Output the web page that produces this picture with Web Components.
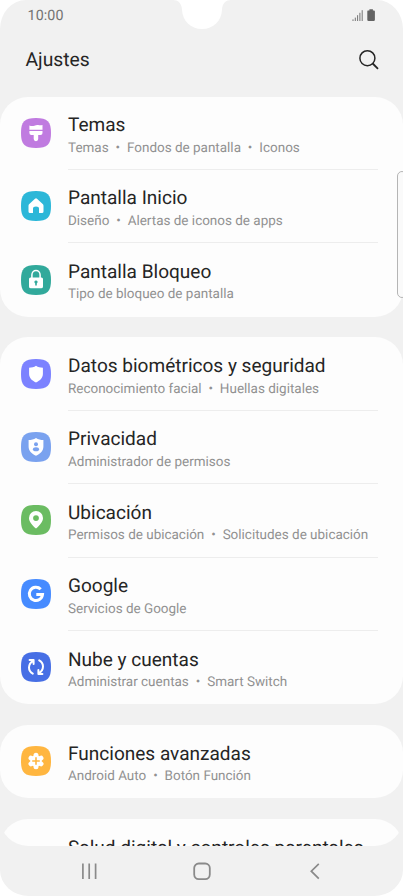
<!DOCTYPE html>
<html lang="es">
<head>
<meta charset="utf-8">
<title>Ajustes</title>
<style>
  html, body {
    margin: 0;
    height: 100%;
    background: #fff;
    overflow: hidden;
  }
  body {
    font-family: Roboto, "Liberation Sans", sans-serif;
    text-rendering: geometricPrecision;
  }
</style>
</head>
<body>
<phone-screen>
  <status-bar slot="status" time="10:00"></status-bar>
  <app-header slot="header">Ajustes</app-header>

  <settings-card>
    <settings-row icon="themes" color="#c07be0" summary="Temas|Fondos de pantalla|Iconos">Temas</settings-row>
    <settings-row icon="home" color="#2cb7d8" summary="Diseño|Alertas de iconos de apps">Pantalla Inicio</settings-row>
    <settings-row icon="lock" color="#31a99b" summary="Tipo de bloqueo de pantalla">Pantalla Bloqueo</settings-row>
  </settings-card>

  <settings-card>
    <settings-row icon="shield" color="#7c82ff" summary="Reconocimiento facial|Huellas digitales">Datos biométricos y seguridad</settings-row>
    <settings-row icon="privacy" color="#7aa2ef" summary="Administrador de permisos">Privacidad</settings-row>
    <settings-row icon="pin" color="#6bbc62" summary="Permisos de ubicación|Solicitudes de ubicación">Ubicación</settings-row>
    <settings-row icon="google" color="#468bff" summary="Servicios de Google">Google</settings-row>
    <settings-row icon="sync" color="#476fe5" summary="Administrar cuentas|Smart Switch">Nube y cuentas</settings-row>
  </settings-card>

  <settings-card>
    <settings-row icon="advanced" color="#ffb640" summary="Android Auto|Botón Función">Funciones avanzadas</settings-row>
  </settings-card>

  <settings-card>
    <settings-row>Salud digital y controles parentales</settings-row>
  </settings-card>

  <edge-handle slot="overlay"></edge-handle>
  <nav-bar slot="nav"></nav-bar>
</phone-screen>

<script>
// Glyphs on a 30x30 tile
const ICONS = {
  themes: `
    <path d="M8.4 7.4q2.4 1.2 5 .3 2.2-.9 3.8-.6 2.1.4 4.3-.1v4.7H8.4z"/>
    <path d="M8.4 12.900h13.100v2q0 2-2 2h-2.300v4.200q0 2.100-2.250 2.100t-2.250-2.100v-4.200h-2.300q-2 0-2-2z"/>`,
  home: `<path d="M14 7.700q1-.9 2 0l5.700 5.300q.8.700.8 1.800v5.700q0 1.500-1.500 1.500h-3v-4.600q0-2-3-2t-3 2V22H9q-1.500 0-1.500-1.500v-5.700q0-1.100.8-1.800z"/>`,
  lock: `
    <path d="M10.900 13V9.900a4.100 4.300 0 0 1 8.200 0V13" fill="none" stroke="#fff" stroke-width="1.500"/>
    <path fill-rule="evenodd" d="M9.500 12.400h11q1.500 0 1.500 1.500v7.500q0 1.900-1.900 1.900H9.900Q8 23.300 8 21.400v-7.500q0-1.500 1.500-1.500zM15 15.400a1.600 1.600 0 0 0-.8 3v2.200h1.600v-2.200a1.600 1.600 0 0 0-.8-3z"/>`,
  shield: `<path d="M15 6.800c2 1.400 4.300 1.900 6.900 1.900v6.100c0 3.900-2.700 6.900-6.900 8.600-4.200-1.700-6.900-4.700-6.900-8.600V8.700c2.600 0 4.900-.5 6.900-1.900z"/>`,
  privacy: `
    <path d="M15 6c2.200 1.500 4.700 2 7.400 2v6.600c0 4.200-2.900 7.400-7.400 9.200-4.500-1.800-7.400-5-7.400-9.200V8c2.700 0 5.200-.5 7.400-2z"/>
    <circle cx="15" cy="12.200" r="2" fill="var(--tile)"/>
    <ellipse cx="15" cy="17.300" rx="3.100" ry="2" fill="var(--tile)"/>`,
  pin: `<path fill-rule="evenodd" d="M15 6a7 6.900 0 0 1 7 6.900c0 4-3.200 6.900-6.300 10.200q-.7.700-1.400 0C11.200 19.800 8 16.900 8 12.900A7 6.900 0 0 1 15 6zm0 4.200a2.900 2.900 0 1 0 0 5.800 2.900 2.900 0 0 0 0-5.800z"/>`,
  google: `<path d="M19.700 10.300A6.600 6.600 0 1 0 21.500 15.600H15.300" fill="none" stroke="#fff" stroke-width="3"/>`,
  sync: `
    <g fill="none" stroke="#fff" stroke-width="2" stroke-linecap="round" stroke-linejoin="round">
      <path d="M11.800 21.600C6.800 18.800 6.600 12.500 12.100 8.500M8.600 8h4v4"/>
      <path d="M18.200 8.400C23.200 11.200 23.400 17.500 17.900 21.500M21.400 22h-4v-4"/>
    </g>`,
  advanced: `
    <g stroke="#fff" stroke-width="5" stroke-linecap="round">
      <path d="M15 9.300v11.400M10 12.150l10 5.700M10 17.850l10-5.700"/>
    </g>
    <circle cx="15" cy="15" r="5.700"/>
    <path d="M15 11.200v7.600M11.200 15h7.600" stroke="var(--tile)" stroke-width="1.600"/>`
};

class PhoneScreen extends HTMLElement {
  constructor() {
    super();
    this.attachShadow({ mode: 'open' });
    this.shadowRoot.innerHTML = `
      <style>
        :host {
          position: relative;
          display: flex;
          flex-direction: column;
          width: 403px;
          height: 896px;
          background: #f1f1f1;
          border-radius: 26px 26px 29px 29px / 29px 29px 26px 26px;
          overflow: hidden;
        }
        main {
          flex: 1;
          min-height: 0;
          display: flex;
          flex-direction: column;
          gap: 20.7px;
          overflow: hidden;
          border-radius: 0 0 28px 28px;
        }
      </style>
      <slot name="status"></slot>
      <slot name="header"></slot>
      <main><slot></slot></main>
      <slot name="nav"></slot>
      <slot name="overlay"></slot>
    `;
  }
}

class StatusBar extends HTMLElement {
  constructor() {
    super();
    this.attachShadow({ mode: 'open' });
    this.shadowRoot.innerHTML = `
      <style>
        :host {
          display: grid;
          grid-template-columns: 1fr 58px 1fr;
          height: 31px;
          flex: none;
          color: #747474;
          font-size: 14.3px;
        }
        time {
          padding-left: 27.5px;
          line-height: 32px;
          letter-spacing: 0.1px;
        }
        svg { display: block; }
        .signals {
          justify-self: end;
          margin: 8px 27px 0 0;
        }
      </style>
      <time>${this.getAttribute('time')}</time>
      <svg width="58" height="31" viewBox="0 0 58 31">
        <path d="M0 0c5 0 8.500 3 9 9.500C9.500 21 17.500 29 29 29s19.500-8 20-19.500C49.500 3 53 0 58 0z" fill="#fff"/>
      </svg>
      <svg class="signals" width="24" height="14" viewBox="0 0 24 14">
        <path d="M1 13v-1.600M3.300 13V9.600M5.600 13V7.200M7.900 13V4.800M10.200 13V2.200" stroke="#747474" stroke-width="1"/>
        <path d="M15.900 2.500h1.500V1.200h3.500v1.300h1q1 0 1 1v8.200q0 1.300-1.300 1.300h-5q-1.300 0-1.300-1.300V3.500q0-1 .6-1z" fill="#636363"/>
      </svg>
    `;
  }
}

class AppHeader extends HTMLElement {
  constructor() {
    super();
    this.attachShadow({ mode: 'open' });
    this.shadowRoot.innerHTML = `
      <style>
        :host {
          display: flex;
          align-items: center;
          justify-content: space-between;
          flex: none;
          height: 57px;
          padding: 0 23px 8.500px 25.500px;
          color: #252525;
          font-size: 19.300px;
        }
        svg { display: block; }
      </style>
      <slot></slot>
      <svg width="22" height="22" viewBox="0 0 22 22" fill="none" stroke="#252525" stroke-width="1.500">
        <circle cx="9.400" cy="9.200" r="7.500"/>
        <path d="M14.700 14.500l5.300 5.300" stroke-width="1.800"/>
      </svg>
    `;
  }
}

class SettingsCard extends HTMLElement {
  constructor() {
    super();
    this.attachShadow({ mode: 'open' });
    this.shadowRoot.innerHTML = `
      <style>
        :host {
          display: block;
          flex: none;
          background: #fdfdfd;
          border-radius: 28px;
        }
        ::slotted(:not(:last-child)) {
          --divider: #ededed;
        }
      </style>
      <slot></slot>
    `;
  }
}

class SettingsRow extends HTMLElement {
  constructor() {
    super();
    this.attachShadow({ mode: 'open' });
    this._render();
  }

  _render() {
    const icon = ICONS[this.getAttribute('icon')] || '';
    const color = this.getAttribute('color') || 'transparent';
    const summary = (this.getAttribute('summary') || '')
      .split('|')
      .join('<i>•</i>');

    this.shadowRoot.innerHTML = `
      <style>
        :host {
          --tile: ${color};
          display: grid;
          grid-template-columns: 30px 1fr;
          column-gap: 17px;
          height: 73.400px;
          padding: 0 25px 0 21px;
          box-sizing: border-box;
        }
        svg {
          display: block;
          margin-top: 21.300px;
        }
        .text {
          box-sizing: border-box;
          height: 73.400px;
          padding-top: 16.600px;
          border-bottom: 1px solid var(--divider, transparent);
          white-space: nowrap;
        }
        .title {
          color: #252525;
          font-size: 19.050px;
          line-height: 23px;
        }
        .summary {
          color: #919191;
          font-size: 13.480px;
          line-height: 16px;
          margin-top: 3.600px;
        }
        i {
          font-style: normal;
          margin: 0 6.900px;
        }
      </style>
      <svg width="30" height="30" viewBox="0 0 30 30" fill="#fff">
        <path d="M15 0C26.500 0 30 3.500 30 15S26.500 30 15 30 0 26.500 0 15 3.500 0 15 0z" fill="var(--tile)"/>
        ${icon}
      </svg>
      <div class="text">
        <div class="title"><slot></slot></div>
        <div class="summary">${summary}</div>
      </div>
    `;
  }
}

class EdgeHandle extends HTMLElement {
  constructor() {
    super();
    this.attachShadow({ mode: 'open' });
    this.shadowRoot.innerHTML = `
      <style>
        :host {
          position: absolute;
          top: 171px;
          right: -4px;
          width: 10px;
          height: 127px;
          box-sizing: border-box;
          border: 1.500px solid #b5b5b5;
          border-radius: 5px;
          background: #fafafa;
        }
      </style>
    `;
  }
}

class NavBar extends HTMLElement {
  constructor() {
    super();
    this.attachShadow({ mode: 'open' });
    this.shadowRoot.innerHTML = `
      <style>
        :host {
          display: flex;
          align-items: center;
          justify-content: space-between;
          flex: none;
          height: 50.500px;
          padding: 1px 79px 0;
          box-sizing: border-box;
        }
        svg { display: block; }
      </style>
      <svg width="20" height="20" viewBox="0 0 20 20" stroke="#8a8a8a" stroke-width="1.700">
        <path d="M3.900 2.400v15.600M10.200 2.400v15.600M16.600 2.400v15.600"/>
      </svg>
      <svg width="20" height="20" viewBox="0 0 20 20" fill="none" stroke="#8a8a8a" stroke-width="1.800">
        <rect x="2.200" y="2.500" width="15.600" height="15.600" rx="4.600"/>
      </svg>
      <svg width="20" height="20" viewBox="0 0 20 20" fill="none" stroke="#8a8a8a" stroke-width="1.700">
        <path d="M14.800 2.900L7.300 10.200l7.500 7.400"/>
      </svg>
    `;
  }
}

customElements.define('phone-screen', PhoneScreen);
customElements.define('status-bar', StatusBar);
customElements.define('app-header', AppHeader);
customElements.define('settings-card', SettingsCard);
customElements.define('settings-row', SettingsRow);
customElements.define('edge-handle', EdgeHandle);
customElements.define('nav-bar', NavBar);
</script>
</body>
</html>
